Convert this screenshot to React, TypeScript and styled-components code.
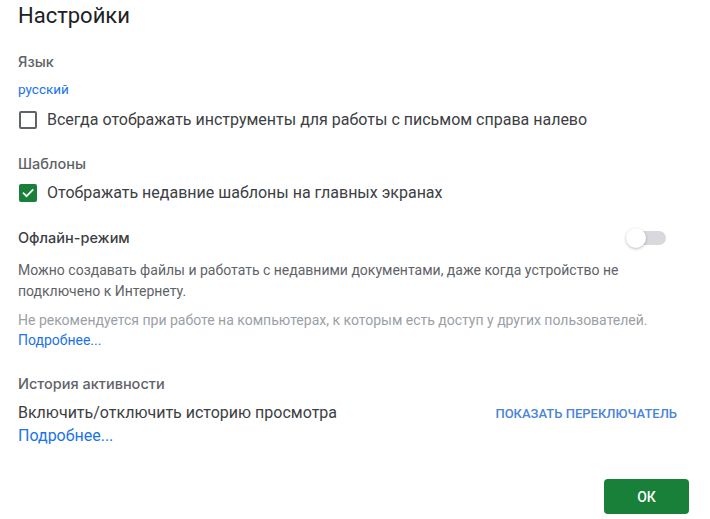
import React, { useState } from "react";
import styled, { createGlobalStyle } from "styled-components";

const GlobalStyle = createGlobalStyle`
  html, body {
    margin: 0;
    padding: 0;
    background: #ffffff;
  }
  body {
    font-family: Roboto, "Liberation Sans", Arial, sans-serif;
  }
`;

const Colors = {
  Text: "#3c4043",
  SubText: "#5f6368",
  Muted: "#9aa0a6",
  Blue: "#1a73e8",
  Green: "#188038",
};

const CheckRow: React.FC<{
  checked: boolean;
  label: string;
  top: number;
  onToggle: () => void;
}> = ({ checked, label, top, onToggle }) => (
  <Row top={top} onClick={onToggle}>
    <Box checked={checked}>
      {checked && (
        <svg width="14" height="14" viewBox="0 0 24 24">
          <path
            d="M4.5 12.5l5 5L20 7"
            fill="none"
            stroke="#fff"
            strokeWidth="3"
            strokeLinecap="square"
          />
        </svg>
      )}
    </Box>
    <RowLabel>{label}</RowLabel>
  </Row>
);

export default function App() {
  const [rtl, setRtl] = useState(false);
  const [templates, setTemplates] = useState(true);
  const [offline, setOffline] = useState(false);

  return (
    <>
      <GlobalStyle />
      <Page>
        <Title>Настройки</Title>

        <SectionLabel top={20}>Язык</SectionLabel>
        <LangLink>русский</LangLink>
        <CheckRow
          top={9}
          checked={rtl}
          label="Всегда отображать инструменты для работы с письмом справа налево"
          onToggle={() => setRtl(!rtl)}
        />

        <SectionLabel top={22}>Шаблоны</SectionLabel>
        <CheckRow
          top={7}
          checked={templates}
          label="Отображать недавние шаблоны на главных экранах"
          onToggle={() => setTemplates(!templates)}
        />

        <OfflineRow>
          <SectionLabel top={0} strong>
            Офлайн-режим
          </SectionLabel>
          <Switch on={offline} onClick={() => setOffline(!offline)}>
            <Track on={offline} />
            <Thumb on={offline} />
          </Switch>
        </OfflineRow>
        <Paragraph>
          Можно создавать файлы и работать с недавними документами, даже когда устройство не
          подключено к Интернету.
        </Paragraph>
        <Hint>
          Не рекомендуется при работе на компьютерах, к которым есть доступ у других пользователей.
        </Hint>
        <SmallLink>Подробнее...</SmallLink>

        <SectionLabel top={24}>История активности</SectionLabel>
        <HistoryRow>
          <BodyText>Включить/отключить историю просмотра</BodyText>
          <TextButton>Показать переключатель</TextButton>
        </HistoryRow>
        <BigLink>Подробнее...</BigLink>

        <Footer>
          <OkButton>ОК</OkButton>
        </Footer>
      </Page>
    </>
  );
}

const Page = styled.div`
  width: 710px;
  box-sizing: border-box;
  padding: 0 21px 0 18px;
  display: flex;
  flex-direction: column;
  color: ${Colors.Text};
`;

const Title = styled.h1`
  margin: 0;
  font-size: 22px;
  line-height: 32px;
  font-weight: 400;
  color: #202124;
`;

const SectionLabel = styled.div<{ top: number; strong?: boolean }>`
  margin-top: ${(p) => p.top}px;
  font-family: Inter, Roboto, sans-serif;
  font-size: 14.5px;
  line-height: 20px;
  font-weight: 500;
  color: ${(p) => (p.strong ? Colors.Text : Colors.SubText)};
`;

const LangLink = styled.a`
  margin-top: 7px;
  font-size: 13.5px;
  line-height: 20px;
  color: ${Colors.Blue};
  cursor: pointer;
`;

const Row = styled.label<{ top: number }>`
  margin-top: ${(p) => p.top}px;
  display: flex;
  align-items: center;
  gap: 10px;
  height: 24px;
  cursor: pointer;
`;

const Box = styled.span<{ checked: boolean }>`
  box-sizing: border-box;
  width: 18px;
  height: 18px;
  margin-left: 1px;
  border-radius: 2px;
  border: 2px solid ${(p) => (p.checked ? Colors.Green : Colors.SubText)};
  background: ${(p) => (p.checked ? Colors.Green : "transparent")};
  display: flex;
  align-items: center;
  justify-content: center;
`;

const RowLabel = styled.span`
  font-size: 16px;
  line-height: 22px;
  color: ${Colors.Text};
`;

const OfflineRow = styled.div`
  margin-top: 21px;
  height: 24px;
  display: flex;
  align-items: center;
  justify-content: space-between;
`;

const Switch = styled.div<{ on: boolean }>`
  position: relative;
  width: 40px;
  height: 24px;
  margin-right: 23px;
  cursor: pointer;
`;

const Track = styled.div<{ on: boolean }>`
  position: absolute;
  left: 4px;
  right: 0;
  top: 5px;
  height: 14px;
  border-radius: 7px;
  background: ${(p) => (p.on ? "#a8dab5" : "#d7d9dc")};
`;

const Thumb = styled.div<{ on: boolean }>`
  position: absolute;
  top: 2px;
  left: ${(p) => (p.on ? "20px" : "0")};
  width: 20px;
  height: 20px;
  border-radius: 50%;
  background: ${(p) => (p.on ? Colors.Green : "#ffffff")};
  box-shadow: 0 1px 3px rgba(60, 64, 67, 0.35);
`;

const Paragraph = styled.p`
  margin: 10px 0 0;
  font-size: 14px;
  line-height: 21px;
  color: ${Colors.SubText};
`;

const Hint = styled.p`
  margin: 8px 0 0;
  font-size: 14px;
  line-height: 20px;
  color: ${Colors.Muted};
`;

const SmallLink = styled.a`
  font-size: 14px;
  line-height: 20px;
  color: ${Colors.Blue};
  cursor: pointer;
`;

const HistoryRow = styled.div`
  margin-top: 8px;
  display: flex;
  align-items: center;
  justify-content: space-between;
`;

const BodyText = styled.span`
  font-size: 16px;
  line-height: 22px;
  color: ${Colors.Text};
`;

const TextButton = styled.button`
  border: none;
  background: none;
  padding: 0 12px 0 8px;
  font-family: inherit;
  font-size: 13px;
  font-weight: 500;
  text-transform: uppercase;
  color: #4a84d8;
  cursor: pointer;
`;

const BigLink = styled.a`
  margin-top: 1px;
  font-size: 16px;
  line-height: 22px;
  color: ${Colors.Blue};
  cursor: pointer;
`;

const Footer = styled.div`
  margin-top: 32px;
  display: flex;
  justify-content: flex-end;
`;

const OkButton = styled.button`
  width: 85px;
  height: 35px;
  border: none;
  border-radius: 4px;
  background: ${Colors.Green};
  color: #ffffff;
  font-family: inherit;
  font-size: 14px;
  font-weight: 500;
  cursor: pointer;
`;
